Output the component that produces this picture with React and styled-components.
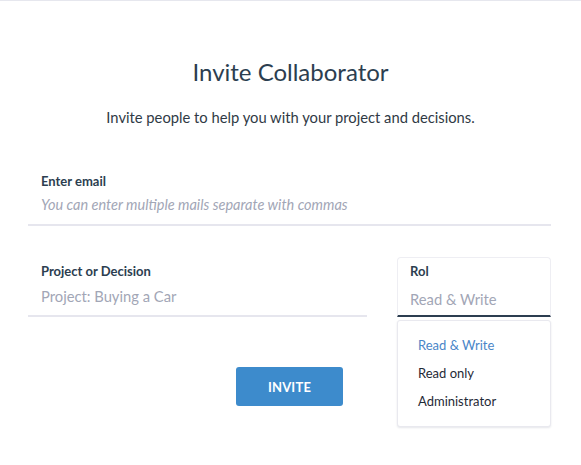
import React from "react";
import styled, { createGlobalStyle } from "styled-components";

const Global = createGlobalStyle`
  html, body { margin: 0; padding: 0; background: #fff; }
  body { font-family: Lato, "Open Sans", Arial, sans-serif; color: #2c3e50; }
  * { box-sizing: border-box; }
`;

const Page = styled.div`
  width: 581px;
  min-height: 465px;
  border-top: 1px solid #e6e7ee;
  padding: 57px 30px 0 28px;
`;

const Title = styled.h1`
  margin: 0;
  text-align: center;
  font-size: 24px;
  line-height: 28px;
  font-weight: 400;
  color: #2c3e50;
  padding-left: 2px;
`;

const Subtitle = styled.p`
  margin: 21px 0 0;
  text-align: center;
  font-size: 14.75px;
  line-height: 20px;
  color: #2f3a45;
  padding-left: 2px;
`;

const Field = styled.div`
  display: flex;
  flex-direction: column;
  padding: ${p => p.$pad || "0 0 9px 13px"};
  border-bottom: 2px solid #e6e6ee;
  width: ${p => p.$width || "auto"};
  margin-top: ${p => p.$mt || "0"};
`;

const Label = styled.span`
  font-size: 13px;
  line-height: 16px;
  font-weight: 700;
  color: #2c3e50;
`;

const Value = styled.span`
  margin-top: ${p => p.$mt || "6px"};
  font-size: ${p => p.$size || "14.75px"};
  line-height: 20px;
  font-style: ${p => (p.$italic ? "italic" : "normal")};
  color: #a2a6b6;
`;

const Row = styled.div`
  display: flex;
  align-items: flex-start;
  justify-content: space-between;
  margin-top: 31px;
`;

const SelectWrap = styled.div`
  position: relative;
  width: 154px;
`;

const SelectBox = styled.div`
  display: flex;
  flex-direction: column;
  padding: 5px 12px 6px 12px;
  border: 1px solid #eeeef3;
  border-bottom: 2px solid #2c3e50;
  border-radius: 4px 4px 0 0;
  background: #fff;
`;

const Menu = styled.ul`
  position: absolute;
  left: 0;
  right: 0;
  top: 63px;
  margin: 0;
  list-style: none;
  padding: 10px 0 11px 20px;
  background: #fff;
  border: 1px solid #e9e9ef;
  border-radius: 3px;
  box-shadow: 0 1px 2px rgba(40, 50, 80, 0.12);
`;

const Item = styled.li`
  font-size: 13px;
  line-height: 28px;
  color: ${p => (p.$active ? "#4a86c8" : "#1f2a36")};
`;

const Actions = styled.div`
  display: flex;
  justify-content: center;
  margin-top: 50px;
`;

const Button = styled.button`
  width: 107px;
  height: 39px;
  border: none;
  border-radius: 3px;
  background: #3d8bcc;
  color: #fff;
  font-family: Lato, Arial, sans-serif;
  font-weight: 700;
  font-size: 13px;
  letter-spacing: 0.2px;
  cursor: pointer;
`;

export default function App() {
  return (
    <>
      <Global />
      <Page>
        <Title>Invite Collaborator</Title>
        <Subtitle>Invite people to help you with your project and decisions.</Subtitle>
        <Field $mt="46px" $pad="0 0 9px 13px">
          <Label>Enter email</Label>
          <Value $italic $size="14.5px">You can enter multiple mails separate with commas</Value>
        </Field>
        <Row>
          <Field $width="339px" $pad="6px 0 9px 13px">
            <Label>Project or Decision</Label>
            <Value $mt="7px">Project: Buying a Car</Value>
          </Field>
          <SelectWrap>
            <SelectBox>
              <Label>Rol</Label>
              <Value $mt="10px">Read &amp; Write</Value>
            </SelectBox>
            <Menu>
              <Item $active>Read &amp; Write</Item>
              <Item>Read only</Item>
              <Item>Administrator</Item>
            </Menu>
          </SelectWrap>
        </Row>
        <Actions>
          <Button>INVITE</Button>
        </Actions>
      </Page>
    </>
  );
}
